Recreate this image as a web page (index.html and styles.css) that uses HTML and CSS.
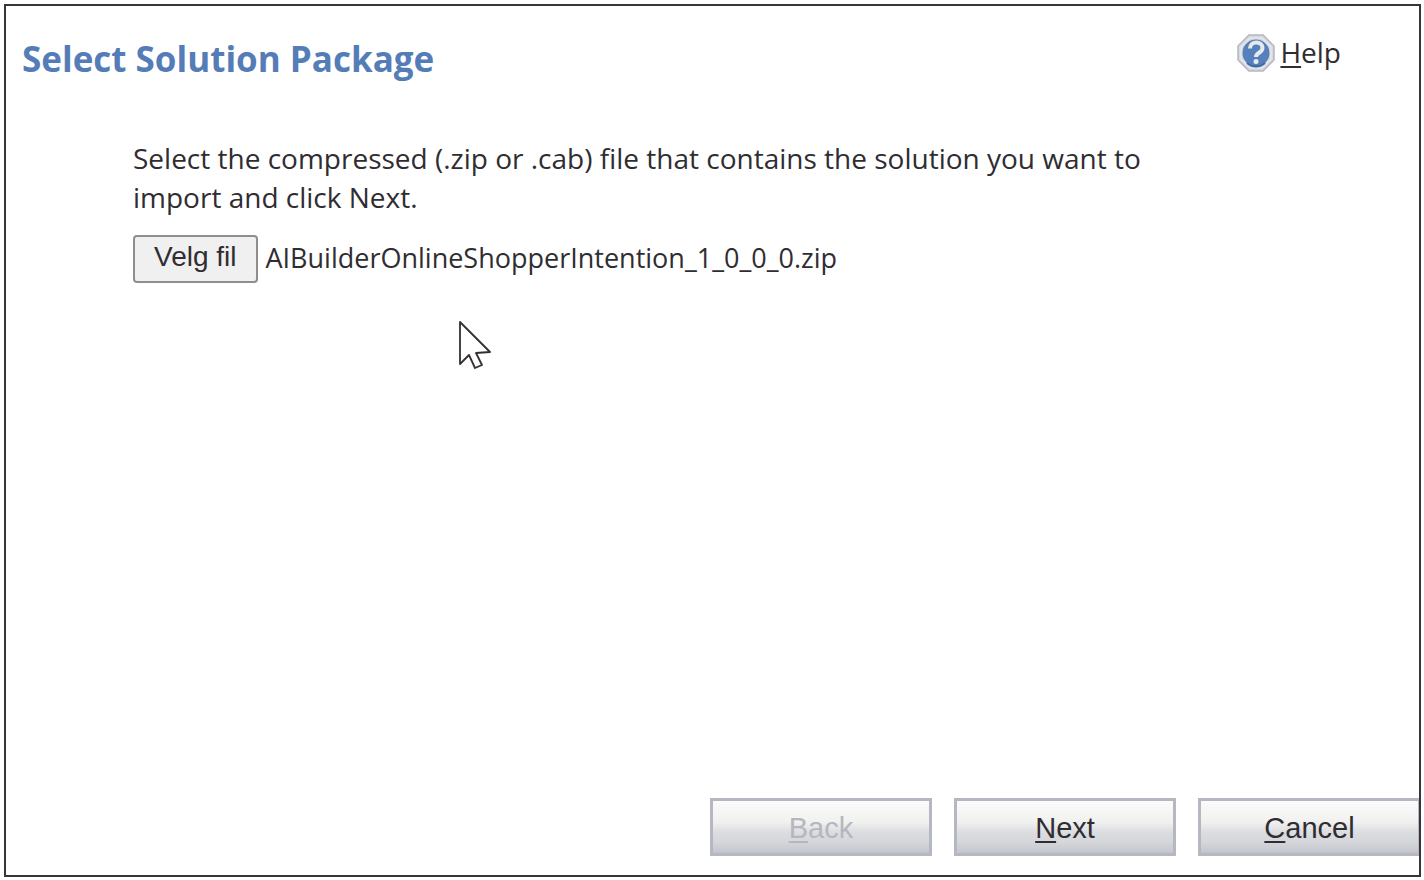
FILE: index.html
```html
<!DOCTYPE html>
<html lang="en">
<head>
<meta charset="utf-8">
<title>Select Solution Package</title>
<link rel="stylesheet" href="styles.css">
</head>
<body>
<main class="dialog">
  <header class="header">
    <h1 class="title">Select Solution Package</h1>
    <a class="help" href="#help">
      <svg class="help-icon" viewBox="0 0 38 38" aria-hidden="true">
        <path d="M12 1h14l11 11v14L26 37H12L1 26V12z" fill="#d6d8dd" stroke="#b4b8c2" stroke-width="1.5"/>
        <path d="M13 4h12l9 9v12l-9 9H13l-9-9V13z" fill="none" stroke="#e6e8ea" stroke-width="1.5"/>
        <circle cx="19" cy="19" r="13.5" fill="#5580bb"/>
        <path d="M10 29a13.5 13.5 0 0 0 18 0" fill="none" stroke="#3d69a8" stroke-width="2"/>
        <path d="M13 14.500c0-8 12.500-8 12.500-.5 0 5-6.500 4.500-6.500 9" fill="none" stroke="#e6e9ee" stroke-width="4"/>
        <circle cx="19" cy="27.500" r="2.500" fill="#e6e9ee"/>
      </svg>
      <span><u>H</u>elp</span>
    </a>
  </header>
  <section class="content">
    <p class="instructions">Select the compressed (.zip or .cab) file that contains the solution you want to import and click Next.</p>
    <div class="file-row">
      <button class="file-button" id="choose" type="button">Velg fil</button>
      <output class="file-name" for="choose">AIBuilderOnlineShopperIntention_1_0_0_0.zip</output>
    </div>
  </section>
  <footer class="actions">
    <button class="action" type="button" disabled><u>B</u>ack</button>
    <button class="action" type="button"><u>N</u>ext</button>
    <button class="action action-edge" type="button"><u>C</u>ancel</button>
  </footer>
</main>
<svg class="cursor" viewBox="0 0 34 50" aria-hidden="true">
  <path d="M2 2v42l9-9 6 13 7-3-6-12 14-1z" fill="#fff" stroke="#332f33" stroke-width="1.800" stroke-linejoin="round"/>
</svg>
</body>
</html>
```
FILE: styles.css
```css
* {
  box-sizing: border-box;
}

body {
  display: flex;
  min-height: 100vh;
  margin: 0;
  padding: 4px 3px 3px 4px;
  background: #fff;
  color: #302d32;
  font-family: "Open Sans", "Noto Sans", sans-serif;
  font-size: 28px;
  line-height: 39px;
}

.dialog {
  display: flex;
  flex: 1;
  flex-direction: column;
  border: 2px solid #38343a;
}

.header {
  display: flex;
  align-items: flex-start;
  justify-content: space-between;
  padding: 27px 78px 0 16px;
}

.title {
  margin: 0;
  padding-top: 6px;
  color: #547db7;
  font-size: 35px;
  font-weight: 700;
  line-height: 40px;
}

.help {
  display: flex;
  align-items: center;
  gap: 5px;
  color: inherit;
  text-decoration: none;
}

.help-icon {
  width: 38px;
  height: 38px;
}

u {
  text-decoration-thickness: 2px;
  text-underline-offset: 3px;
}

.content {
  flex: 1;
  padding: 60px 260px 0 127px;
}

.instructions {
  margin: 0 0 18px;
}

.file-row {
  display: flex;
  align-items: center;
  gap: 8px;
}

.file-button {
  height: 48px;
  padding: 0 19px 4px;
  border: 2px solid #8f8d91;
  border-radius: 4px;
  background: #f0f0f0;
  color: inherit;
  font-family: "Liberation Sans", Arial, sans-serif;
  font-size: 28px;
}

.file-name {
  padding-bottom: 4px;
  font-size: 27px;
  white-space: nowrap;
}

.actions {
  display: flex;
  justify-content: flex-end;
  gap: 22px;
  padding-bottom: 19px;
}

.action {
  width: 222px;
  height: 58px;
  padding: 2px 0 0;
  border: 3px solid #b5b8c2;
  background: linear-gradient(#fbfbfb, #f1f1f0 40%, #dcdde0 60%, #d5d6da 80%, #c3c5cc);
  color: inherit;
  font-family: "Liberation Sans", Arial, sans-serif;
  font-size: 29px;
}

.action-edge {
  width: 221px;
  border-right-width: 1px;
}

.action:disabled {
  color: #b5b7c0;
}

.cursor {
  position: absolute;
  top: 320px;
  left: 458px;
  width: 34px;
  height: 50px;
}
```
